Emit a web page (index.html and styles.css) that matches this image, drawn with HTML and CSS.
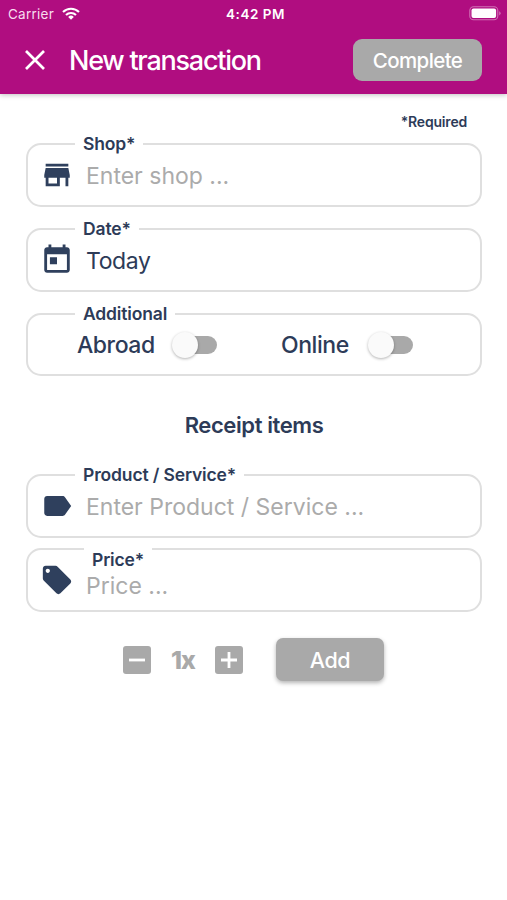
FILE: index.html
```html
<!DOCTYPE html>
<html lang="en">
<head>
<meta charset="utf-8">
<title>New transaction</title>
<link rel="stylesheet" href="styles.css">
</head>
<body>
<header class="header">
  <div class="status">
    <div class="carrier"><span>Carrier</span>
      <svg class="wifi" viewBox="0 0 18 13"><g fill="none" stroke="#fff" stroke-width="2.1"><path d="M1 5a11.4 11.4 0 0 1 16 0"/><path d="M4 8.1a7.1 7.1 0 0 1 10 0"/></g><path d="M9 12.8 6.2 9.9a4 4 0 0 1 5.6 0z" fill="#fff"/></svg>
    </div>
    <span class="time">4:42 PM</span>
    <svg class="battery" viewBox="0 0 32 15"><rect x=".8" y=".8" width="28" height="13" rx="3.8" fill="none" stroke="#d070b4" stroke-width="1.1"/><rect x="2.5" y="2.5" width="24.6" height="9.6" rx="2" fill="#fff"/><path d="M30.2 5.2q1.4.7 1.4 2.1t-1.4 2.1z" fill="#d070b4"/></svg>
  </div>
  <div class="bar">
    <svg class="close" viewBox="0 0 20 20"><path d="M1 1l18 18M19 1L1 19" stroke="#fff" stroke-width="2.7"/></svg>
    <h1 class="title">New transaction</h1>
    <button class="btn complete"><span>Complete</span></button>
  </div>
</header>
<main class="main">
  <p class="required">*Required</p>
  <section class="field">
    <span class="label">Shop*</span>
    <svg class="icon" viewBox="0 0 24 24"><path d="M20 4H4v2h16V4zm1 10v-2l-1-5H4l-1 5v2h1v6h10v-6h4v6h2v-6h1zm-9 4H6v-4h6v4z"/></svg>
    <span class="value hint">Enter shop ...</span>
  </section>
  <section class="field">
    <span class="label">Date*</span>
    <svg class="icon" viewBox="0 0 24 24"><path d="M19 3h-1V1h-2v2H8V1H6v2H5c-1.11 0-1.99.9-1.99 2L3 19c0 1.1.89 2 2 2h14c1.1 0 2-.9 2-2V5c0-1.1-.9-2-2-2zm0 16H5V8h14v11zM7 10h5v5H7v-5z"/></svg>
    <span class="value today">Today</span>
  </section>
  <section class="field toggles">
    <span class="label">Additional</span>
    <span class="toggle-name abroad">Abroad</span><span class="switch"></span>
    <span class="toggle-name online">Online</span><span class="switch"></span>
  </section>
  <h2 class="heading">Receipt items</h2>
  <section class="field">
    <span class="label">Product / Service*</span>
    <svg class="icon" viewBox="0 0 24 24"><path d="M17.63 5.84C17.27 5.33 16.67 5 16 5L5 5.01C3.9 5.01 3 5.9 3 7v10c0 1.1.9 1.99 2 1.99L16 19c.67 0 1.27-.33 1.63-.84L22 12l-4.37-6.16z"/></svg>
    <span class="value hint">Enter Product / Service ...</span>
  </section>
  <section class="field price">
    <span class="label price-label">Price*</span>
    <svg class="icon" viewBox="0 0 24 24"><path d="M21.41 11.58l-9-9C12.05 2.22 11.55 2 11 2H4c-1.1 0-2 .9-2 2v7c0 .55.22 1.05.59 1.42l9 9c.36.36.86.58 1.41.58.55 0 1.05-.22 1.41-.59l7-7c.37-.36.59-.86.59-1.41 0-.55-.23-1.06-.59-1.42zM5.5 7C4.67 7 4 6.33 4 5.5S4.67 4 5.5 4 7 4.67 7 5.5 6.33 7 5.5 7z"/></svg>
    <span class="value hint price-hint">Price ...</span>
  </section>
  <div class="actions">
    <svg class="step" viewBox="0 0 28 28"><rect width="28" height="28" rx="3" fill="#a9a9a9"/><path d="M6 14h16" stroke="#fff" stroke-width="2.8"/></svg>
    <span class="count">1x</span>
    <svg class="step" viewBox="0 0 28 28"><rect width="28" height="28" rx="3" fill="#a9a9a9"/><path d="M6 14h16M14 6v16" stroke="#fff" stroke-width="2.8"/></svg>
    <button class="btn add"><span>Add</span></button>
  </div>
</main>
</body>
</html>
```
FILE: styles.css
```css
* { box-sizing: border-box; }
body {
  margin: 0;
  height: 900px;
  background: #fff;
  color: #2d3b58;
  font-family: Inter, "Liberation Sans", sans-serif;
  white-space: nowrap;
}
svg { display: block; flex: none; }
.header {
  height: 94px;
  background: #b00d80;
  color: #fff;
  box-shadow: 0 1px 5px rgba(0, 0, 0, .25);
}
.status {
  height: 27px;
  display: grid;
  grid-template-columns: 1fr auto 1fr;
  align-items: center;
  padding: 0 6px 0 8px;
  font-size: 13.5px;
}
.carrier { display: flex; align-items: center; gap: 8px; color: #f7dcef; letter-spacing: .25px; }
.wifi { width: 18px; height: 13px; }
.time { padding-left: 2px; font-weight: 600; letter-spacing: .5px; }
.battery { width: 32px; height: 15px; justify-self: end; }
.bar { height: 66px; display: flex; align-items: center; padding: 0 25px; }
.close { width: 20px; height: 20px; }
.title { margin: 0 auto 0 24px; font-size: 27px; font-weight: 500; letter-spacing: -1.25px; }
.btn {
  display: flex;
  align-items: center;
  justify-content: center;
  padding: 0;
  border: 0;
  background: #a9a9a9;
  color: #fff;
  font-family: inherit;
  font-weight: 500;
}
.complete { width: 129px; height: 42px; border-radius: 9px; font-size: 20.5px; letter-spacing: -.6px; }
.main { padding: 20px 25px 0 26px; }
.required { margin: 0 15px 13px 0; height: 16px; line-height: 16px; font-size: 14px; font-weight: 600; letter-spacing: -.2px; text-align: right; }
.field {
  position: relative;
  height: 64px;
  margin-bottom: 21px;
  padding-left: 12px;
  display: flex;
  align-items: center;
  border: 2px solid #dfdfdf;
  border-radius: 15px;
}
.label {
  position: absolute;
  top: -12px;
  left: 47px;
  padding: 0 8px;
  line-height: 22px;
  background: #fff;
  font-size: 17.5px;
  font-weight: 600;
  letter-spacing: -.15px;
}
.icon { width: 34px; height: 34px; fill: #2f405d; }
.value { margin-left: 12px; padding-top: 2px; font-size: 23px; line-height: 32px; }
.hint { color: #ababab; }
.today { letter-spacing: -.4px; }
.toggles { height: 63px; padding-left: 49px; }
.toggle-name { padding-top: 1px; font-size: 23px; font-weight: 500; letter-spacing: -.45px; }
.abroad { width: 95px; }
.online { width: 87px; margin-left: 64px; }
.switch {
  position: relative;
  width: 45px;
  height: 18px;
  border-radius: 9px;
  background: linear-gradient(90deg, transparent 12px, #a9a9a9 12px);
}
.switch::before {
  content: "";
  position: absolute;
  top: -4px;
  left: 0;
  width: 26px;
  height: 26px;
  border-radius: 50%;
  background: #fafafa;
  box-shadow: 0 1px 3px rgba(0, 0, 0, .3);
}
.heading { margin: 0 0 34px; height: 43px; padding-top: 13px; line-height: 30px; font-size: 22px; font-weight: 600; letter-spacing: -.4px; text-align: center; }
.price { margin-top: -11px; }
.price-label { left: 56px; top: -3px; padding-top: 2px; }
.price-hint { padding-top: 11px; }
.actions { display: flex; align-items: center; margin: 26px 0 0 97px; height: 43px; }
.step { width: 28px; height: 28px; }
.count { width: 64px; text-align: center; font-size: 25px; font-weight: 800; color: #a9a9a9; letter-spacing: -1px; }
.add { width: 108px; height: 43px; margin-left: 33px; border-radius: 7px; font-size: 21.5px; letter-spacing: -.4px; box-shadow: 0 2px 4px rgba(0, 0, 0, .3); }
```
